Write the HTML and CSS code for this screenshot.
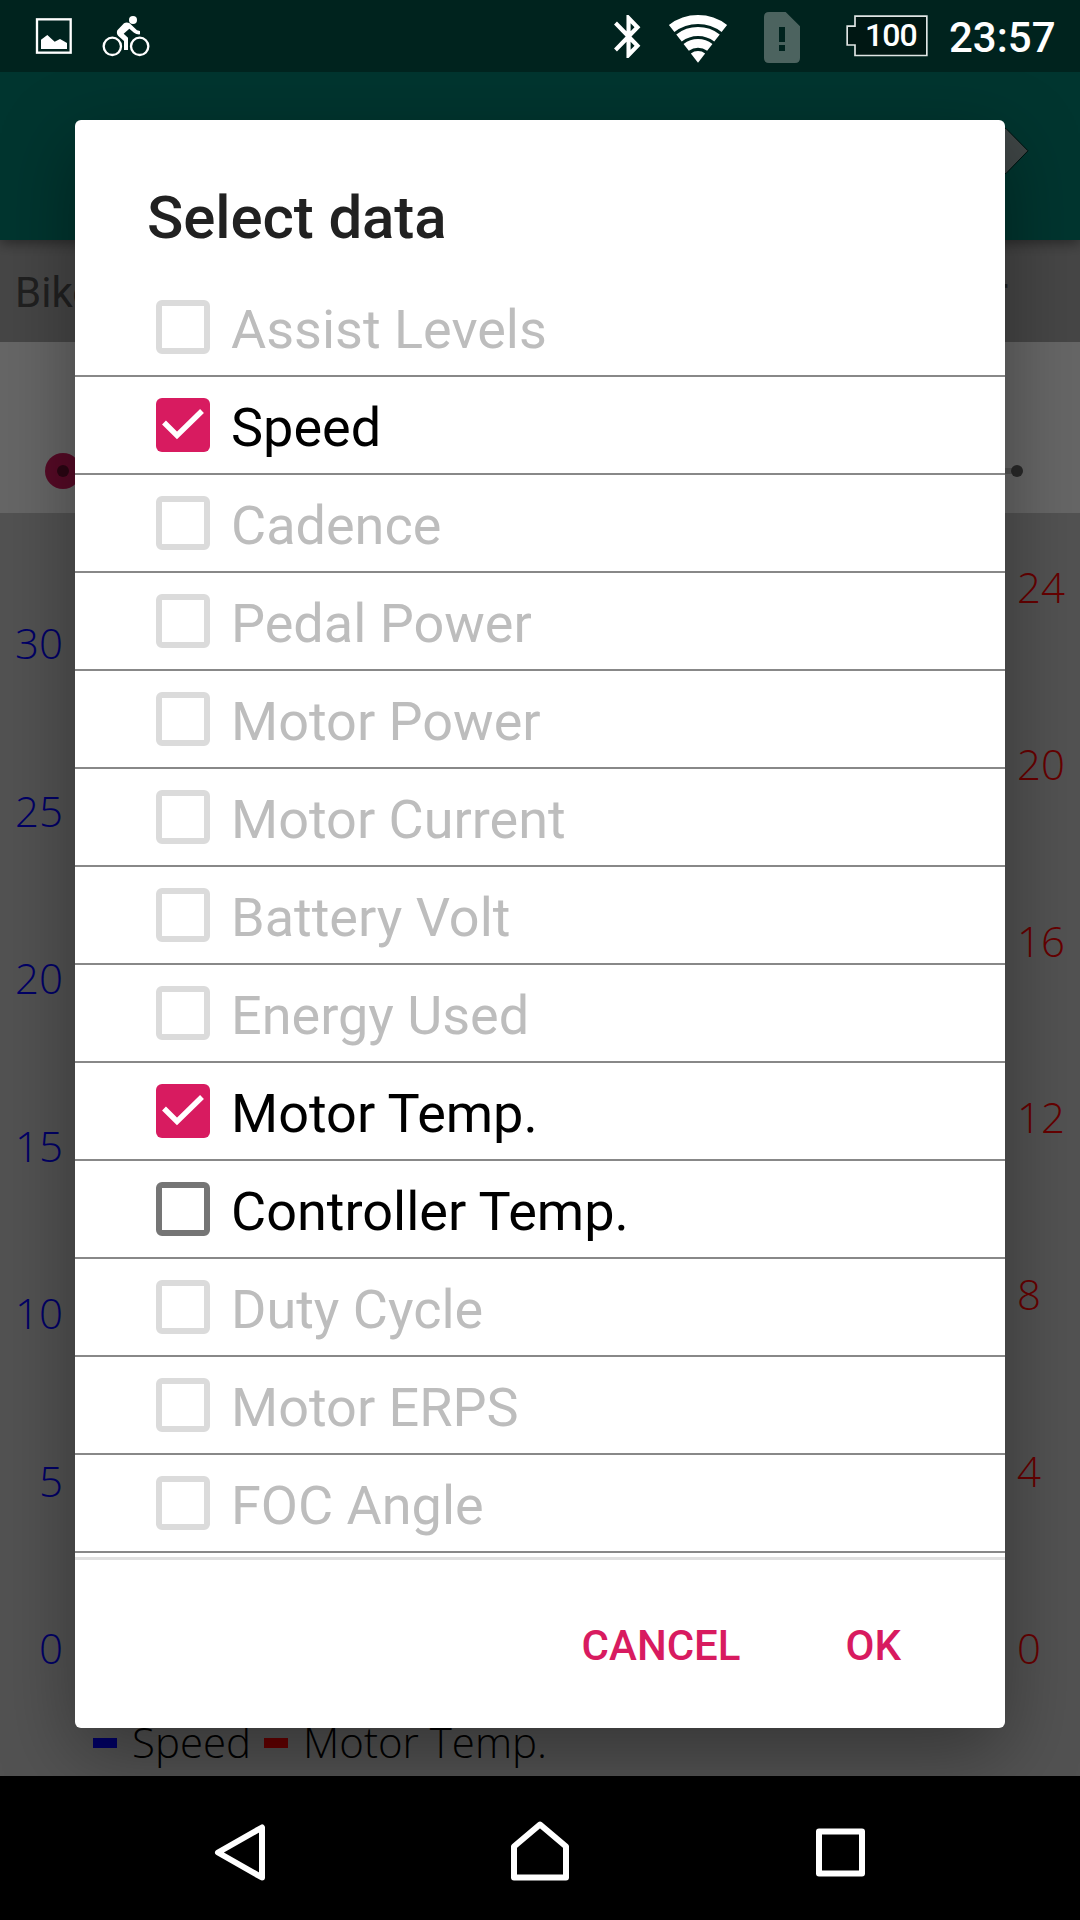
FILE: index.html
```html
<!DOCTYPE html>
<html lang="en">
<head>
<meta charset="utf-8">
<title>Select data</title>
<link rel="stylesheet" href="styles.css">
</head>
<body>
<div class="screen">
  <header class="status">
    <svg class="status-left" viewBox="0 0 480 216" width="160" height="72">
      <rect x="111" y="58" width="101" height="100" fill="none" stroke="#fff" stroke-width="7"/>
      <path d="M123 147V119L142 105L164 125L180 117L201 129V147Z" fill="#fff"/>
      <g fill="none" stroke="#fff" stroke-width="7">
        <circle cx="337" cy="139" r="26"/><circle cx="419" cy="139" r="26"/>
      </g>
      <circle cx="399" cy="60" r="12" fill="#fff"/>
      <path d="M372 70Q380 65 389 70L411 91L420 93V103Q410 104 402 98L388 86L371 101L384 113V150H372V123L355 108Q348 101 352 91Z" fill="#fff"/>
    </svg>
    <div class="status-right">
      <svg viewBox="0 0 690 216" width="230" height="72">
        <path transform="translate(71 32.1) scale(6.22 6.45)" fill="#fff" d="M17.71 7.71L12 2h-1v7.59L6.41 5 5 6.41 10.59 12 5 17.59 6.41 19 11 14.41V22h1l5.71-5.71-4.3-4.29 4.3-4.29zM13 5.83l1.88 1.88L13 9.59V5.83zm1.88 10.46L13 18.17v-3.76l1.88 1.88z"/>
        <g fill="none" stroke="#fff">
          <path stroke-width="27" d="M275 85.4A129.5 129.5 0 0 1 433 85.4"/>
          <path stroke-width="27" d="M297 113.9A93.5 93.5 0 0 1 411 113.9"/>
          <path stroke-width="26" d="M318.6 142.1A58 58 0 0 1 389.4 142.1"/>
        </g>
        <path fill="#fff" d="M354 188L332.6 160.3A35 35 0 0 1 375.4 160.3Z"/>
        <path fill="#4c635f" fill-rule="evenodd" d="M567 36H617L660 79V174Q660 189 645 189H567Q552 189 552 174V51Q552 36 567 36ZM597 81V126H615V81ZM597 135V153H615V135Z"/>
      </svg>
      <div class="battery">
        <svg viewBox="0 0 246 126" width="82" height="42"><path d="M27 3.5H242.500V121.500H27V90H3.500V33.500H27Z" fill="#001713" stroke="#dfe5e4" stroke-width="5"/></svg>
        <span class="battery-level">100</span>
      </div>
      <span class="clock">23:57</span>
    </div>
  </header>

  <main class="app">
    <div class="app-bar">
      <svg viewBox="0 0 60 48" width="60" height="48"><path d="M2 1.500H37L59 23.800L37 46.500H2Z" fill="#9fb0ae" stroke="#002a25" stroke-width="1" stroke-linejoin="round"/></svg>
    </div>
    <div class="tabs"><span>Bike</span><span>r</span></div>
    <div class="slider">
      <svg viewBox="0 0 1080 171" width="1080" height="171">
        <rect x="63" y="126" width="954" height="6" fill="#d2d2d2"/>
        <circle cx="63" cy="129" r="18" fill="#d81b60"/>
        <circle cx="63" cy="129" r="6" fill="#6b0d30"/>
        <circle cx="1017" cy="129" r="6" fill="#666"/>
      </svg>
    </div>
    <section class="chart">
      <div class="axes">
        <div class="axis axis-left"><span>30</span><span>25</span><span>20</span><span>15</span><span>10</span><span>5</span><span>0</span></div>
        <div class="axis axis-right"><span>24</span><span>20</span><span>16</span><span>12</span><span>8</span><span>4</span><span>0</span></div>
      </div>
      <div class="legend">
        <i class="swatch swatch-speed"></i><span class="legend-speed">Speed</span>
        <i class="swatch swatch-temp"></i><span>Motor Temp.</span>
      </div>
    </section>

    <div class="scrim">
      <div class="dialog">
        <h1 class="dialog-title">Select data</h1>
        <ul class="options">
          <li class="option disabled"><i class="box"></i><span>Assist Levels</span></li>
          <li class="option"><i class="box checked"><svg viewBox="0 0 54 54" width="54" height="54"><path d="M8 24.500L21 37.500L46 13"/></svg></i><span>Speed</span></li>
          <li class="option disabled"><i class="box"></i><span>Cadence</span></li>
          <li class="option disabled"><i class="box"></i><span>Pedal Power</span></li>
          <li class="option disabled"><i class="box"></i><span>Motor Power</span></li>
          <li class="option disabled"><i class="box"></i><span>Motor Current</span></li>
          <li class="option disabled"><i class="box"></i><span>Battery Volt</span></li>
          <li class="option disabled"><i class="box"></i><span>Energy Used</span></li>
          <li class="option"><i class="box checked"><svg viewBox="0 0 54 54" width="54" height="54"><path d="M8 24.500L21 37.500L46 13"/></svg></i><span>Motor Temp.</span></li>
          <li class="option"><i class="box"></i><span>Controller Temp.</span></li>
          <li class="option disabled"><i class="box"></i><span>Duty Cycle</span></li>
          <li class="option disabled"><i class="box"></i><span>Motor ERPS</span></li>
          <li class="option disabled"><i class="box"></i><span>FOC Angle</span></li>
        </ul>
        <div class="actions"><span>CANCEL</span><span>OK</span></div>
      </div>
    </div>
  </main>

  <nav class="nav">
    <svg viewBox="0 0 1080 144" width="1080" height="144" fill="none" stroke="#fff" stroke-width="6" stroke-linejoin="round">
      <path d="M262 51.500V101.500L218 76.500Z"/>
      <path d="M514 70.500L540 48.500L566 70.500V101.500H514Z"/>
      <rect x="819" y="55.500" width="43" height="42"/>
    </svg>
  </nav>
</div>
</body>
</html>
```
FILE: styles.css
```css
* { box-sizing: border-box; }
body { margin: 0; font-family: Roboto, "Liberation Sans", sans-serif; }
svg { display: block; flex: none; }
.screen { width: 1080px; height: 1920px; display: flex; flex-direction: column; overflow: hidden; background: #000; }

/* status bar */
.status { height: 72px; flex: none; display: flex; justify-content: space-between; background: #00231e; color: #fff; font-weight: 500; }
.status-right { width: 500px; display: flex; align-items: flex-start; }
.status-right > svg { margin-right: 36px; }
.battery { position: relative; width: 82px; margin-top: 15px; }
.battery-level { position: absolute; left: 19px; top: 0; line-height: 40px; font-size: 32px; letter-spacing: -1px; }
.clock { margin-left: 21px; font-size: 42px; line-height: 76px; }

/* page behind the dialog */
.app { position: relative; height: 1704px; flex: none; display: flex; flex-direction: column; overflow: hidden; background: #ccc; }
.app-bar { position: relative; z-index: 1; height: 168px; flex: none; display: flex; justify-content: flex-end; padding: 55px 51px 0 0; background: #008577; box-shadow: 0 4px 12px rgba(0, 0, 0, .4); }
.tabs { height: 102px; flex: none; display: flex; justify-content: space-between; padding: 0 72px 0 15px; background: #b0b0b0; color: #505050; font-size: 42px; line-height: 105px; }
.slider { height: 171px; flex: none; background: #fff; }
.chart { flex: 1; display: flex; flex-direction: column; font-family: "Open Sans", sans-serif; font-weight: 300; font-size: 42px; line-height: 48px; }
.axes { height: 1159px; display: flex; justify-content: space-between; }
.axis { display: flex; flex-direction: column; justify-content: space-between; }
.axis-left { width: 63px; padding-top: 106px; color: #00f; text-align: right; }
.axis-right { width: 63px; padding-top: 50px; color: #f00; }
.legend { display: flex; align-items: center; padding: 46px 0 0 93px; }
.swatch { width: 24px; height: 10px; margin-top: 2px; }
.swatch-speed { background: #00f; margin-right: 15px; }
.swatch-temp { background: #f00; margin-right: 15px; }
.legend-speed { width: 132px; }

/* dialog */
.scrim { position: absolute; z-index: 2; inset: 0; padding: 48px 75px; background: rgba(0, 0, 0, .6); }
.dialog { height: 1608px; display: flex; flex-direction: column; border-radius: 6px; background: #fff; box-shadow: 0 24px 76px rgba(0, 0, 0, .36); }
.dialog-title { margin: 0; padding: 62px 72px 0; height: 159px; font-size: 60px; font-weight: 500; line-height: 71px; letter-spacing: -.1px; color: #212121; }
.options { margin: 0; padding: 0 0 4px; list-style: none; border-bottom: 3px solid #e0e0e0; }
.option { height: 98px; display: flex; padding-left: 81px; border-bottom: 2px solid #888; font-size: 54px; line-height: 101px; color: #000; }
.option.disabled { color: #bdbdbd; }
.box { flex: none; width: 54px; height: 54px; margin: 21px 21px 0 0; border: 6px solid #757575; border-radius: 6px; }
.disabled .box { border-color: #dbdbdb; }
.box.checked { border: 0; background: #d81b60; }
.box path { fill: none; stroke: #fff; stroke-width: 5.500; }
.actions { flex: 1; display: flex; justify-content: flex-end; gap: 105px; padding: 61px 104px 0 0; font-size: 42px; font-weight: 500; line-height: 50px; color: #d81b60; }

.nav { height: 144px; flex: none; background: #000; }
```
